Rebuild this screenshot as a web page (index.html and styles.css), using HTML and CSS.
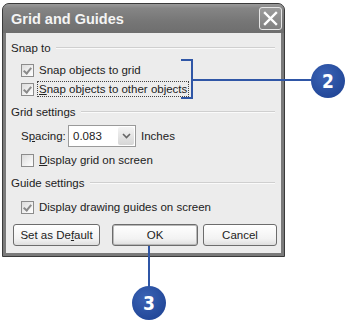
FILE: index.html
```html
<!DOCTYPE html>
<html>
<head>
<meta charset="utf-8">
<link rel="stylesheet" href="styles.css">
</head>
<body>
<div class="stage">
  <div class="dialog">
    <div class="titlebar">
      <span class="title">Grid and Guides</span>
      <span class="close">
        <svg width="17" height="17" viewBox="0 0 17 17"><path d="M3 3 L14 14 M14 3 L3 14" stroke="#fff" stroke-width="2.4" stroke-linecap="square"/></svg>
      </span>
    </div>
    <div class="client">
      <div class="group g1"><span class="glabel">Snap to</span><span class="rule"></span></div>
      <div class="row r1"><span class="cb checked"></span><span class="lbl">Snap objects to grid</span></div>
      <div class="row r2"><span class="cb checked"></span><span class="lbl focus"><u>S</u>nap objects to other objects</span></div>
      <div class="group g2"><span class="glabel">Grid settings</span><span class="rule"></span></div>
      <div class="row spacing">
        <span class="slabel">S<u>p</u>acing:</span>
        <span class="combo"><span class="val">0.083</span><span class="arrow"><svg width="9" height="6" viewBox="0 0 9 6"><path d="M1 1 L4.5 4.5 L8 1" fill="none" stroke="#666" stroke-width="1.6"/></svg></span></span>
        <span class="unit">Inches</span>
      </div>
      <div class="row r3"><span class="cb"></span><span class="lbl"><u>D</u>isplay grid on screen</span></div>
      <div class="group g3"><span class="glabel">Guide settings</span><span class="rule"></span></div>
      <div class="row r4"><span class="cb checked"></span><span class="lbl">Display drawing guides on screen</span></div>
      <div class="buttons">
        <span class="btn b1">Set as De<u>f</u>ault</span>
        <span class="btn b2">OK</span>
        <span class="btn b3">Cancel</span>
      </div>
    </div>
  </div>
  <div class="bracket"></div>
  <div class="hline"></div>
  <div class="badge badge2">2</div>
  <div class="vline"></div>
  <div class="badge badge3">3</div>
</div>
</body>
</html>
```

FILE: styles.css
```css
html, body {
  margin: 0;
  padding: 0;
  background: #ffffff;
}
body {
  font-family: "Liberation Sans", Arial, sans-serif;
  font-size: 11.5px;
  color: #222;
}
.stage {
  position: relative;
  width: 350px;
  height: 324px;
  overflow: hidden;
}
.dialog {
  margin: 3px 0 0 2px;
  width: 275px;
  background: #7a7a7a;
  border: 1px solid #3a3a3a;
  border-radius: 7px 7px 0 0;
  padding: 0 3px 3px 3px;
}
.titlebar {
  height: 29px;
  display: flex;
  align-items: center;
  justify-content: space-between;
  background: linear-gradient(#9a9a9a 0%, #858585 15%, #767676 60%, #6e6e6e 100%);
  margin: 0 -3px;
  padding-left: 8px;
  padding-right: 2px;
  border-radius: 6px 6px 0 0;
}
.title {
  font-family: "Liberation Sans", Arial, sans-serif;
  font-weight: bold;
  font-size: 14.5px;
  color: #f4f4f4;
}
.close {
  width: 21px;
  height: 21px;
  border: 1px solid #e6e6e6;
  border-radius: 3px;
  background: linear-gradient(#9c9c9c, #808080);
  display: flex;
  align-items: center;
  justify-content: center;
}
.client {
  background: #ececec;
  padding: 6px 4px 7px 5px;
  display: flex;
  flex-direction: column;
}
.group {
  height: 18px;
  display: flex;
  align-items: center;
  gap: 5px;
}
.rule {
  flex: 1;
  height: 0;
  border-top: 1px solid #cfcfcf;
  border-bottom: 1px solid #fafafa;
  margin-right: 2px;
}
.row {
  height: 18px;
  display: flex;
  align-items: center;
  padding-left: 10px;
}
.r1 { margin-top: 4px; }
.r2 { margin-top: 1px; }
.g2 { margin-top: 5px; }
.spacing { margin-top: 4px; height: 22px; }
.r3 { margin-top: 4px; }
.g3 { margin-top: 5px; }
.r4 { margin-top: 6px; }
.cb {
  width: 11px;
  height: 11px;
  border: 1px solid #8c8c8c;
  background: linear-gradient(135deg, #dcdcdc, #ffffff);
  position: relative;
  flex: none;
}
.cb.checked::after {
  content: "";
  position: absolute;
  left: 3px;
  top: 1px;
  width: 3px;
  height: 6px;
  border-right: 2px solid #8a8a8a;
  border-bottom: 2px solid #8a8a8a;
  transform: rotate(40deg);
}
.lbl {
  margin-left: 3px;
  padding: 1px 1px;
  border: 1px dotted transparent;
  white-space: nowrap;
}
.lbl.focus {
  border: 1px dotted #444;
}
.slabel {
  width: 47px;
}
.combo {
  width: 66px;
  height: 20px;
  border: 1px solid #9a9a9a;
  background: #fff;
  display: flex;
  align-items: center;
  justify-content: space-between;
}
.val {
  padding-left: 4px;
}
.arrow {
  width: 16px;
  height: 18px;
  margin-right: 1px;
  background: linear-gradient(#f4f4f4, #d6d6d6);
  border-radius: 2px;
  display: flex;
  align-items: center;
  justify-content: center;
}
.unit {
  margin-left: 5px;
}
.buttons {
  margin-top: 8px;
  display: flex;
  align-items: center;
  padding-left: 2px;
}
.btn {
  height: 20px;
  border: 1px solid #6c6c6c;
  border-radius: 3px;
  background: linear-gradient(#ffffff, #f2f2f2 70%, #dedede);
  display: flex;
  align-items: center;
  justify-content: center;
}
.b1 { width: 85px; }
.b2 { width: 84px; margin-left: 12px; box-shadow: inset 0 0 0 1px #b9b9b9; }
.b3 { width: 72px; margin-left: 5px; }

.bracket {
  position: absolute;
  left: 181px;
  top: 59px;
  width: 10px;
  height: 36px;
  border: 2px solid #2f56a6;
  border-left: none;
}
.hline {
  position: absolute;
  left: 191px;
  top: 79px;
  width: 125px;
  height: 2px;
  background: #2f56a6;
}
.vline {
  position: absolute;
  left: 148px;
  top: 246px;
  width: 2px;
  height: 45px;
  background: #2f56a6;
}
.badge {
  position: absolute;
  width: 34px;
  height: 34px;
  border-radius: 50%;
  background: radial-gradient(circle at 40% 35%, #3a63b5, #24499a 70%);
  color: #fff;
  font-family: "DejaVu Sans Condensed", "DejaVu Sans", sans-serif;
  font-weight: bold;
  font-size: 19px;
  display: flex;
  align-items: center;
  justify-content: center;
}
.badge2 { left: 311px; top: 64px; }
.badge3 { left: 132px; top: 286px; }
```
